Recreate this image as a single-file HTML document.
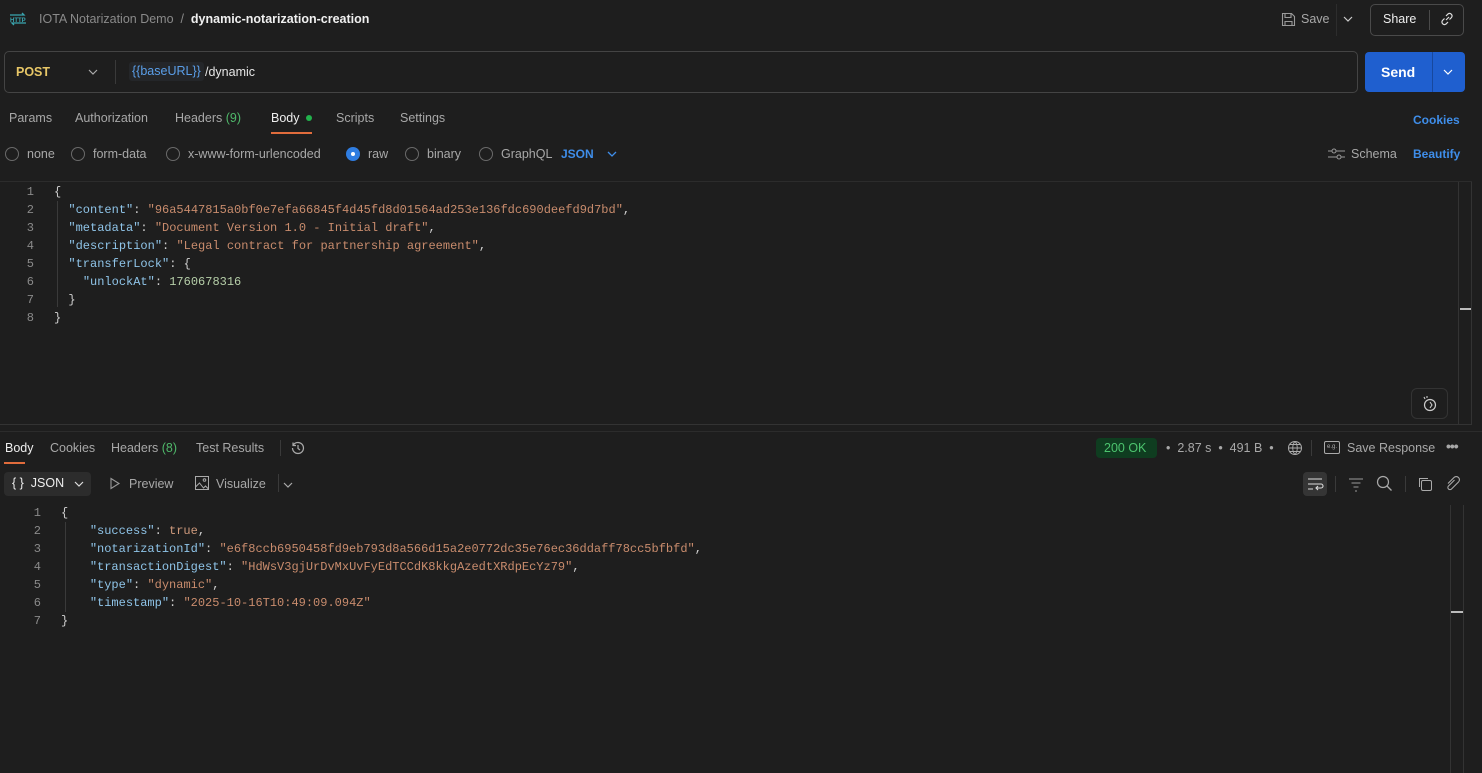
<!DOCTYPE html>
<html><head><meta charset="utf-8"><style>
*{box-sizing:border-box;margin:0;padding:0}
body{width:1482px;height:773px;background:#1e1e1e;font-family:"Liberation Sans",sans-serif;color:#cfcfcf;position:relative;overflow:hidden;font-size:12.5px}
.a{position:absolute;white-space:nowrap}
.mono{font-family:"Liberation Mono",monospace;font-size:12px}
.ln{color:#8a8a8a;text-align:right;width:12px}
.k{color:#8fc4e8}
.s{color:#c98c6d}
.n{color:#b5cea8}
.b{color:#cf9a7c}
.p{color:#cfcfcf}
.radio{width:14px;height:14px;border:1px solid #6a6a6a;border-radius:50%}
.blue{color:#3f8eea;font-weight:bold}
.gray{color:#a8a8a8}
</style></head><body>

<svg class="a" style="left:9px;top:11px" width="18" height="16" viewBox="0 0 18 16"><path d="M1 4h14l-2-2M17 12H3l2 2" stroke="#3aa6b0" fill="none" stroke-width="1.3"/><text x="1" y="11" font-size="6" fill="#3aa6b0" font-family="Liberation Sans" font-weight="bold">HTTP</text></svg>
<div class="a" style="left:39px;top:12px;color:#8a8a8a;font-size:12.5px">IOTA Notarization Demo &nbsp;/&nbsp; <span style="color:#f0f0f0;font-weight:bold">dynamic-notarization-creation</span></div>

<svg class="a" style="left:1281px;top:12px" width="15" height="15" viewBox="0 0 15 15"><path d="M1.5 1.5h9l3 3v9h-12z M4 1.5v4h6v-4 M4 13.5v-4h7v4" stroke="#9a9a9a" fill="none" stroke-width="1.1"/></svg>
<div class="a gray" style="left:1301px;top:12px">Save</div>
<div class="a" style="left:1336px;top:4px;width:1px;height:32px;background:#2d2d2d"></div>
<svg class="a" style="left:1343px;top:15px" width="10" height="8"><path d="M1 2l4 4 4-4" stroke="#ccc" fill="none" stroke-width="1.2"/></svg>
<div class="a" style="left:1370px;top:4px;width:94px;height:32px;border:1px solid #4a4a4a;border-radius:5px"></div>
<div class="a" style="left:1383px;top:12px;color:#eee">Share</div>
<div class="a" style="left:1429px;top:10px;width:1px;height:20px;background:#4a4a4a"></div>
<svg class="a" style="left:1439px;top:11px" width="16" height="16" viewBox="0 0 16 16"><path d="M7 9l3-3M5.5 7.5l-2 2a2.5 2.5 0 003.5 3.5l2-2M10.5 8.5l2-2A2.5 2.5 0 009 3L7 5" stroke="#ddd" fill="none" stroke-width="1.2"/></svg>

<div class="a" style="left:4px;top:51px;width:1354px;height:42px;border:1px solid #444;border-radius:5px"></div>
<div class="a" style="left:16px;top:65px;color:#e8c767;font-weight:bold;font-size:12.5px">POST</div>
<svg class="a" style="left:88px;top:68px" width="10" height="8"><path d="M1 2l4 4 4-4" stroke="#aaa" fill="none" stroke-width="1.2"/></svg>
<div class="a" style="left:115px;top:60px;width:1px;height:24px;background:#3a3a3a"></div>
<div class="a" style="left:129px;top:62px;height:19px;padding:2px 3px;background:#242629;border-radius:3px;color:#5a9ee8;font-size:12.5px">{{baseURL}}</div>
<div class="a" style="left:205px;top:65px;color:#e6e6e6">/dynamic</div>
<div class="a" style="left:1365px;top:52px;width:100px;height:40px;background:#1f5fcf;border-radius:4px"></div>
<div class="a" style="left:1381px;top:64px;color:#fff;font-weight:bold;font-size:14px">Send</div>
<div class="a" style="left:1432px;top:52px;width:1px;height:40px;background:#17489e"></div>
<svg class="a" style="left:1443px;top:68px" width="10" height="8"><path d="M1 2l4 4 4-4" stroke="#fff" fill="none" stroke-width="1.2"/></svg>

<div class="a gray" style="left:9px;top:111px">Params</div>
<div class="a gray" style="left:75px;top:111px">Authorization</div>
<div class="a gray" style="left:175px;top:111px">Headers <span style="color:#4fb86a">(9)</span></div>
<div class="a" style="left:271px;top:111px;color:#eee">Body</div>
<div class="a" style="left:306px;top:115px;width:6px;height:6px;border-radius:50%;background:#22b24c"></div>
<div class="a" style="left:271px;top:132px;width:41px;height:2px;background:#e06c3c"></div>
<div class="a gray" style="left:336px;top:111px">Scripts</div>
<div class="a gray" style="left:400px;top:111px">Settings</div>
<div class="a blue" style="left:1413px;top:113px;font-size:12px">Cookies</div>

<div class="a radio" style="left:5px;top:147px"></div><div class="a gray" style="left:27px;top:147px">none</div>
<div class="a radio" style="left:71px;top:147px"></div><div class="a gray" style="left:93px;top:147px">form-data</div>
<div class="a radio" style="left:166px;top:147px"></div><div class="a gray" style="left:188px;top:147px">x-www-form-urlencoded</div>
<div class="a" style="left:346px;top:147px;width:14px;height:14px;border-radius:50%;background:#2f7de1"></div><div class="a" style="left:351px;top:152px;width:4px;height:4px;border-radius:50%;background:#fff"></div>
<div class="a gray" style="left:368px;top:147px">raw</div>
<div class="a radio" style="left:405px;top:147px"></div><div class="a gray" style="left:427px;top:147px">binary</div>
<div class="a radio" style="left:479px;top:147px"></div><div class="a gray" style="left:501px;top:147px">GraphQL</div>
<div class="a blue" style="left:561px;top:147px;font-size:12px">JSON</div>
<svg class="a" style="left:607px;top:150px" width="10" height="8"><path d="M1 2l4 4 4-4" stroke="#3f8eea" fill="none" stroke-width="1.3"/></svg>
<svg class="a" style="left:1328px;top:147px" width="17" height="14" viewBox="0 0 17 14"><path d="M0 4h17M0 10h17" stroke="#999" stroke-width="1"/><circle cx="6" cy="4" r="2" fill="#1e1e1e" stroke="#999"/><circle cx="11" cy="10" r="2" fill="#1e1e1e" stroke="#999"/></svg>
<div class="a gray" style="left:1351px;top:147px">Schema</div>
<div class="a blue" style="left:1413px;top:147px;font-size:12px">Beautify</div>

<div class="a" style="left:0;top:181px;width:1472px;height:1px;background:#2c2c2c"></div>
<div class="a" style="left:1458px;top:182px;width:1px;height:242px;background:#333"></div>
<div class="a" style="left:1460px;top:308px;width:12px;height:2px;background:#bbb"></div>
<div class="a" style="left:1471px;top:182px;width:1px;height:242px;background:#333"></div>
<div class="a" style="left:57px;top:201px;width:1px;height:106px;background:#3a3a3a"></div>
<div class="a mono" style="left:22px;top:183px;line-height:18px">
<div class="ln">1</div><div class="ln">2</div><div class="ln">3</div><div class="ln">4</div><div class="ln">5</div><div class="ln">6</div><div class="ln">7</div><div class="ln">8</div></div>
<div class="a mono p" style="left:54px;top:183px;line-height:18px;white-space:pre">{
  <span class="k">"content"</span>: <span class="s">"96a5447815a0bf0e7efa66845f4d45fd8d01564ad253e136fdc690deefd9d7bd"</span>,
  <span class="k">"metadata"</span>: <span class="s">"Document Version 1.0 - Initial draft"</span>,
  <span class="k">"description"</span>: <span class="s">"Legal contract for partnership agreement"</span>,
  <span class="k">"transferLock"</span>: {
    <span class="k">"unlockAt"</span>: <span class="n">1760678316</span>
  }
}</div>
<div class="a" style="left:1411px;top:388px;width:37px;height:31px;border:1px solid #333;border-radius:6px"></div>
<svg class="a" style="left:1421px;top:395px" width="17" height="17" viewBox="0 0 17 17"><circle cx="9" cy="10" r="5.5" stroke="#ccc" fill="none" stroke-width="1.2"/><path d="M9 7l2 3-2 3M3 2l1 2M6 1v2" stroke="#ccc" fill="none" stroke-width="1.1"/></svg>
<div class="a" style="left:0;top:424px;width:1472px;height:1px;background:#333"></div>
<div class="a" style="left:0;top:431px;width:1482px;height:1px;background:#2c2c2c"></div>

<div class="a" style="left:5px;top:441px;color:#eee">Body</div>
<div class="a" style="left:4px;top:462px;width:21px;height:2px;background:#e06c3c"></div>
<div class="a gray" style="left:50px;top:441px">Cookies</div>
<div class="a gray" style="left:111px;top:441px">Headers <span style="color:#4fb86a">(8)</span></div>
<div class="a gray" style="left:196px;top:441px">Test Results</div>
<div class="a" style="left:280px;top:440px;width:1px;height:16px;background:#3a3a3a"></div>
<svg class="a" style="left:290px;top:440px" width="16" height="16" viewBox="0 0 16 16"><path d="M2.5 8a5.5 5.5 0 105.5-5.5A5.5 5.5 0 003 5.5M3 2.5v3h3M8 5v3.5l2 1.5" stroke="#aaa" fill="none" stroke-width="1.2"/></svg>

<div class="a" style="left:1096px;top:438px;width:61px;height:20px;background:#0f3d20;border-radius:4px"></div>
<div class="a" style="left:1104px;top:441px;color:#4cc46e">200 OK</div>
<div class="a gray" style="left:1166px;top:441px">•&nbsp; 2.87 s &nbsp;•&nbsp; 491 B &nbsp;•</div>
<svg class="a" style="left:1287px;top:440px" width="16" height="16" viewBox="0 0 16 16"><circle cx="8" cy="8" r="6.5" stroke="#aaa" fill="none"/><path d="M1.5 8h13M8 1.5c-3 3-3 10 0 13M8 1.5c3 3 3 10 0 13M3 4.5h10M3 11.5h10" stroke="#aaa" fill="none" stroke-width=".9"/></svg>
<div class="a" style="left:1311px;top:440px;width:1px;height:16px;background:#3a3a3a"></div>
<div class="a" style="left:1324px;top:441px;width:16px;height:13px;border:1px solid #aaa;border-radius:2px;font-size:6px;color:#aaa;text-align:center;line-height:11px">e.g.</div>
<div class="a gray" style="left:1347px;top:441px">Save Response</div>
<div class="a gray" style="left:1446px;top:438px;font-size:14px;font-weight:bold;letter-spacing:-1px">•••</div>

<div class="a" style="left:4px;top:472px;width:87px;height:24px;background:#2c2c2c;border-radius:4px"></div>
<div class="a" style="left:12px;top:476px;color:#eee">{ }&nbsp; JSON</div>
<svg class="a" style="left:74px;top:480px" width="10" height="8"><path d="M1 2l4 4 4-4" stroke="#ddd" fill="none" stroke-width="1.2"/></svg>
<svg class="a" style="left:109px;top:477px" width="12" height="13"><path d="M2 1.5l8 5-8 5z" stroke="#999" fill="none" stroke-width="1.1"/></svg>
<div class="a gray" style="left:129px;top:477px">Preview</div>
<svg class="a" style="left:194px;top:475px" width="16" height="16" viewBox="0 0 16 16"><rect x="1.5" y="1.5" width="13" height="13" stroke="#aaa" fill="none"/><path d="M1.5 12l4-4 4 5 2-2 3 3" stroke="#aaa" fill="none"/><circle cx="10.5" cy="5" r="1.3" stroke="#aaa" fill="none"/></svg>
<div class="a gray" style="left:216px;top:477px">Visualize</div>
<div class="a" style="left:278px;top:474px;width:1px;height:18px;background:#3a3a3a"></div>
<svg class="a" style="left:283px;top:481px" width="10" height="8"><path d="M1 2l4 4 4-4" stroke="#aaa" fill="none" stroke-width="1.2"/></svg>

<div class="a" style="left:1303px;top:472px;width:24px;height:24px;background:#353535;border-radius:4px"></div>
<svg class="a" style="left:1306px;top:476px" width="18" height="16" viewBox="0 0 18 16"><path d="M2 3h14M2 8h13a2 2 0 010 4h-4M2 13h5M12 10l-2 2 2 2" stroke="#ddd" fill="none" stroke-width="1.1"/></svg>
<div class="a" style="left:1335px;top:476px;width:1px;height:16px;background:#3a3a3a"></div>
<svg class="a" style="left:1348px;top:476px" width="16" height="16" viewBox="0 0 16 16"><path d="M1 3h14M3.5 7h9M5.5 11h5M7 15h2" stroke="#999" stroke-width="1.1"/></svg>
<svg class="a" style="left:1376px;top:475px" width="17" height="17" viewBox="0 0 17 17"><circle cx="7" cy="7" r="5.5" stroke="#aaa" fill="none" stroke-width="1.2"/><path d="M11 11l4.5 4.5" stroke="#aaa" stroke-width="1.3"/></svg>
<div class="a" style="left:1405px;top:476px;width:1px;height:16px;background:#3a3a3a"></div>
<svg class="a" style="left:1417px;top:476px" width="16" height="16" viewBox="0 0 16 16"><rect x="4.5" y="4.5" width="10" height="10" rx="1.5" stroke="#aaa" fill="none"/><path d="M2.5 11V2.5H11" stroke="#aaa" fill="none"/></svg>
<svg class="a" style="left:1445px;top:476px" width="16" height="16" viewBox="0 0 16 16"><path d="M9.5 4l-6 6a2 2 0 003 3l7-7a3 3 0 00-4.5-4.5L3 7.5" stroke="#aaa" fill="none" stroke-width="1.1"/></svg>

<div class="a" style="left:1450px;top:505px;width:1px;height:268px;background:#333"></div>
<div class="a" style="left:1451px;top:611px;width:12px;height:2px;background:#bbb"></div>
<div class="a" style="left:1463px;top:505px;width:1px;height:268px;background:#333"></div>
<div class="a" style="left:65px;top:522px;width:1px;height:90px;background:#3a3a3a"></div>
<div class="a mono" style="left:29px;top:504px;line-height:18px">
<div class="ln">1</div><div class="ln">2</div><div class="ln">3</div><div class="ln">4</div><div class="ln">5</div><div class="ln">6</div><div class="ln">7</div></div>
<div class="a mono p" style="left:61px;top:504px;line-height:18px;white-space:pre">{
    <span class="k">"success"</span>: <span class="b">true</span>,
    <span class="k">"notarizationId"</span>: <span class="s">"e6f8ccb6950458fd9eb793d8a566d15a2e0772dc35e76ec36ddaff78cc5bfbfd"</span>,
    <span class="k">"transactionDigest"</span>: <span class="s">"HdWsV3gjUrDvMxUvFyEdTCCdK8kkgAzedtXRdpEcYz79"</span>,
    <span class="k">"type"</span>: <span class="s">"dynamic"</span>,
    <span class="k">"timestamp"</span>: <span class="s">"2025-10-16T10:49:09.094Z"</span>
}</div>
</body></html>
